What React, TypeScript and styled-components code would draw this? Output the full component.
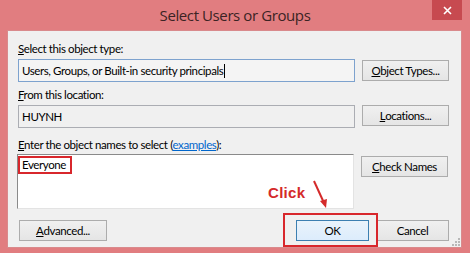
import React from "react";
import styled, { createGlobalStyle } from "styled-components";

const Global = createGlobalStyle`
  html, body { margin: 0; padding: 0; background: #e17d80; }
  body { font-family: Lato, "Open Sans", sans-serif; }
  * { box-sizing: border-box; }
`;

const Window = styled.div`
  width: 470px;
  height: 253px;
  background: #e17d80;
  display: flex;
  flex-direction: column;
  overflow: hidden;
`;

const TitleBar = styled.div`
  height: 30px;
  display: grid;
  grid-template-columns: 1fr auto 1fr;
  align-items: start;
`;

const Title = styled.div`
  grid-column: 2;
  font-family: "Open Sans", sans-serif;
  font-size: 15px;
  line-height: 20px;
  margin-top: 5px;
  color: #3b2324;
  letter-spacing: -0.4px;
`;

const CloseButton = styled.div`
  grid-column: 3;
  justify-self: end;
  width: 30px;
  height: 20px;
  margin-right: 8px;
  background: #c74a50;
  display: flex;
  align-items: center;
  justify-content: center;
`;

const Client = styled.div`
  position: relative;
  margin: 0 8px 0 7px;
  height: 218px;
  background: #f0f0f0;
  border: 1px solid #d98a8c;
  padding: 10px 12px 0 10px;
  display: flex;
  flex-direction: column;
  font-family: Lato, "Open Sans", sans-serif;
  font-size: 11.5px;
  letter-spacing: -0.4px;
  color: #000;
`;

const Label = styled.div<{ $mt?: number }>`
  height: 16px;
  line-height: 14px;
  margin-top: ${(p) => p.$mt ?? 0}px;
  white-space: nowrap;
`;

const Row = styled.div<{ $mt?: number }>`
  display: flex;
  align-items: flex-start;
  gap: 7px;
  margin-top: ${(p) => p.$mt ?? 0}px;
`;

const Field = styled.div<{ $focused?: boolean }>`
  width: 337px;
  height: 23px;
  border: 1px solid ${(p) => (p.$focused ? "#7da2ce" : "#abadb3")};
  background: ${(p) => (p.$focused ? "#f4f4f4" : "#f0f0f0")};
  padding: 0 3px;
  line-height: 21px;
  white-space: nowrap;
`;

const Caret = styled.span`
  display: inline-block;
  width: 1px;
  height: 14px;
  background: #000;
  vertical-align: -3px;
  margin-left: 1px;
`;

const TextArea = styled.div`
  width: 337px;
  height: 55px;
  margin-left: -1px;
  background: #fff;
  border-top: 1px solid #8a8a8a;
  border-left: 1px solid #8a8a8a;
  border-right: 1px solid #e3e3e3;
  border-bottom: 1px solid #e3e3e3;
  padding: 1px 0 0 0;
`;

const Highlight = styled.span`
  display: inline-block;
  width: 54px;
  height: 18px;
  line-height: 14px;
  padding: 0 2px;
  border: 2px solid #d8272c;
`;

const Button = styled.div<{ $w?: number; $mt?: number; $ml?: number; $default?: boolean }>`
  width: ${(p) => p.$w ?? 87}px;
  height: 21px;
  margin-top: ${(p) => p.$mt ?? 0}px;
  margin-left: ${(p) => p.$ml ?? 0}px;
  border: 1px solid ${(p) => (p.$default ? "#3c7fb1" : "#acacac")};
  background: ${(p) =>
    p.$default
      ? "linear-gradient(#eaf3fb, #dcecfc)"
      : "linear-gradient(#f0f0f0, #e5e5e5)"};
  display: flex;
  align-items: center;
  justify-content: center;
  line-height: 19px;
  white-space: nowrap;
  flex-shrink: 0;
`;

const Footer = styled.div`
  display: flex;
  align-items: flex-start;
  margin-top: 11px;
`;

const Spacer = styled.div`
  flex: 1;
`;

const OkWrap = styled.div`
  position: relative;
  margin-right: 7px;
  &::after {
    content: "";
    position: absolute;
    left: -13px;
    right: -9px;
    top: -7px;
    bottom: -6px;
    border: 2px solid #d8272c;
    pointer-events: none;
  }
`;

const ClickNote = styled.div`
  position: absolute;
  left: 260px;
  top: 153px;
  font-family: "Liberation Sans", Arial, sans-serif;
  font-weight: bold;
  font-size: 15px;
  color: #d42a2a;
  letter-spacing: 0.3px;
`;

const Arrow = styled.svg`
  position: absolute;
  left: 300px;
  top: 148px;
`;

const Grip = styled.svg`
  position: absolute;
  right: 1px;
  bottom: 1px;
`;

const U = styled.span`
  text-decoration: underline;
  text-underline-offset: 1px;
`;

const Link = styled.span`
  color: #0066cc;
  text-decoration: underline;
  text-underline-offset: 1px;
`;

export default function App() {
  return (
    <Window>
      <Global />
      <TitleBar>
        <Title>Select Users or Groups</Title>
        <CloseButton>
          <svg width="9" height="9" viewBox="0 0 9 9">
            <path d="M1 1L8 8M8 1L1 8" stroke="#fff" strokeWidth="1.6" />
          </svg>
        </CloseButton>
      </TitleBar>
      <Client>
        <Label $mt={1}>
          <U>S</U>elect this object type:
        </Label>
        <Row $mt={1}>
          <Field $focused>
            Users, Groups, or Built-in security principals
            <Caret />
          </Field>
          <Button $mt={1}>
            <U>O</U>bject Types...
          </Button>
        </Row>
        <Label $mt={6}>
          <U>F</U>rom this location:
        </Label>
        <Row $mt={1}>
          <Field>HUYNH</Field>
          <Button>
            <U>L</U>ocations...
          </Button>
        </Row>
        <Label $mt={10}>
          <U>E</U>nter the object names to select (<Link>examples</Link>):
        </Label>
        <Row $mt={0}>
          <TextArea>
            <Highlight>Everyone</Highlight>
          </TextArea>
          <Button $mt={2}>
            <U>C</U>heck Names
          </Button>
        </Row>
        <Footer>
          <Button $w={88} $ml={1}>
            <U>A</U>dvanced...
          </Button>
          <Spacer />
          <OkWrap>
            <Button $w={73} $default>
              OK
            </Button>
          </OkWrap>
          <Button $w={73}>Cancel</Button>
        </Footer>
        <ClickNote>Click</ClickNote>
        <Arrow width="30" height="32" viewBox="0 0 30 32">
          <path d="M6 2L16.5 25" stroke="#d42a2a" strokeWidth="2" fill="none" />
          <path d="M12 22L18 29L19 20Z" fill="#d42a2a" />
        </Arrow>
        <Grip width="8" height="8" viewBox="0 0 8 8">
          {[
            [6, 0],
            [6, 3],
            [3, 3],
            [6, 6],
            [3, 6],
            [0, 6],
          ].map(([x, y], i) => (
            <rect key={i} x={x} y={y} width="2" height="2" fill="#b8b8b8" />
          ))}
        </Grip>
      </Client>
    </Window>
  );
}
